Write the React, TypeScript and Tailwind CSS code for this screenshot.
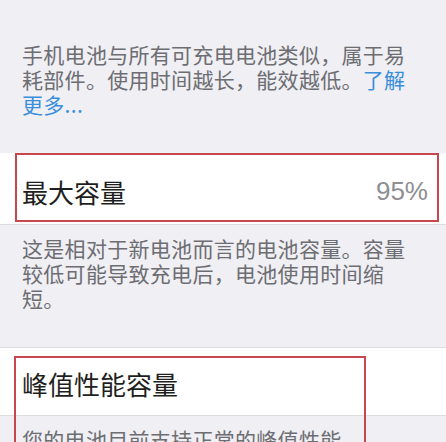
const cjk = { fontFamily: '"Noto Sans CJK SC", "Noto Sans", sans-serif' };

const Footer = ({ children, className = "" }: { children: React.ReactNode; className?: string }) => (
  <p className={`pl-[22px] pr-[30px] text-[21px] leading-[25px] tracking-[0.3px] text-[#6d6d72] ${className}`}>
    {children}
  </p>
);

const App = () => {
  return (
    <div className="w-[446px] h-[442px] overflow-hidden bg-[#efeff4]" style={cjk}>
      <Footer className="pt-[42px] pb-[36px]">
        手机电池与所有可充电电池类似，属于易耗部件。使用时间越长，能效越低。
        <span className="text-[#3a8edb]">了解更多...</span>
      </Footer>

      {/* 最大容量 */}
      <div className="relative h-[72px] bg-white border-b border-[#dcdce0] flex items-center justify-between pl-[22px] pr-[18px] pt-[6px]">
        <span className="text-[26px] text-[#1f1f21]">最大容量</span>
        <span className="text-[26px] text-[#8e8e93]" style={{ fontFamily: '"Liberation Sans", Arial, sans-serif' }}>
          95%
        </span>
        <div className="absolute left-[15px] right-[7px] top-0 bottom-[2px] border-2 border-[#c8474c] pointer-events-none" />
      </div>

      <Footer className="pt-[11px] pb-[36px]">
        这是相对于新电池而言的电池容量。容量较低可能导致充电后，电池使用时间缩短。
      </Footer>

      {/* 峰值性能容量 */}
      <div className="relative">
        <div className="h-[69px] bg-white border-y border-[#dcdce0] flex items-center pl-[22px] pt-[4px]">
          <span className="text-[26px] text-[#1f1f21]">峰值性能容量</span>
        </div>
        <Footer className="pt-[11px]">您的电池目前支持正常的峰值性能。</Footer>
        <div className="absolute left-[14px] w-[352px] top-[9px] h-[120px] border-2 border-[#c8474c] pointer-events-none" />
      </div>
    </div>
  );
};

export default App;
